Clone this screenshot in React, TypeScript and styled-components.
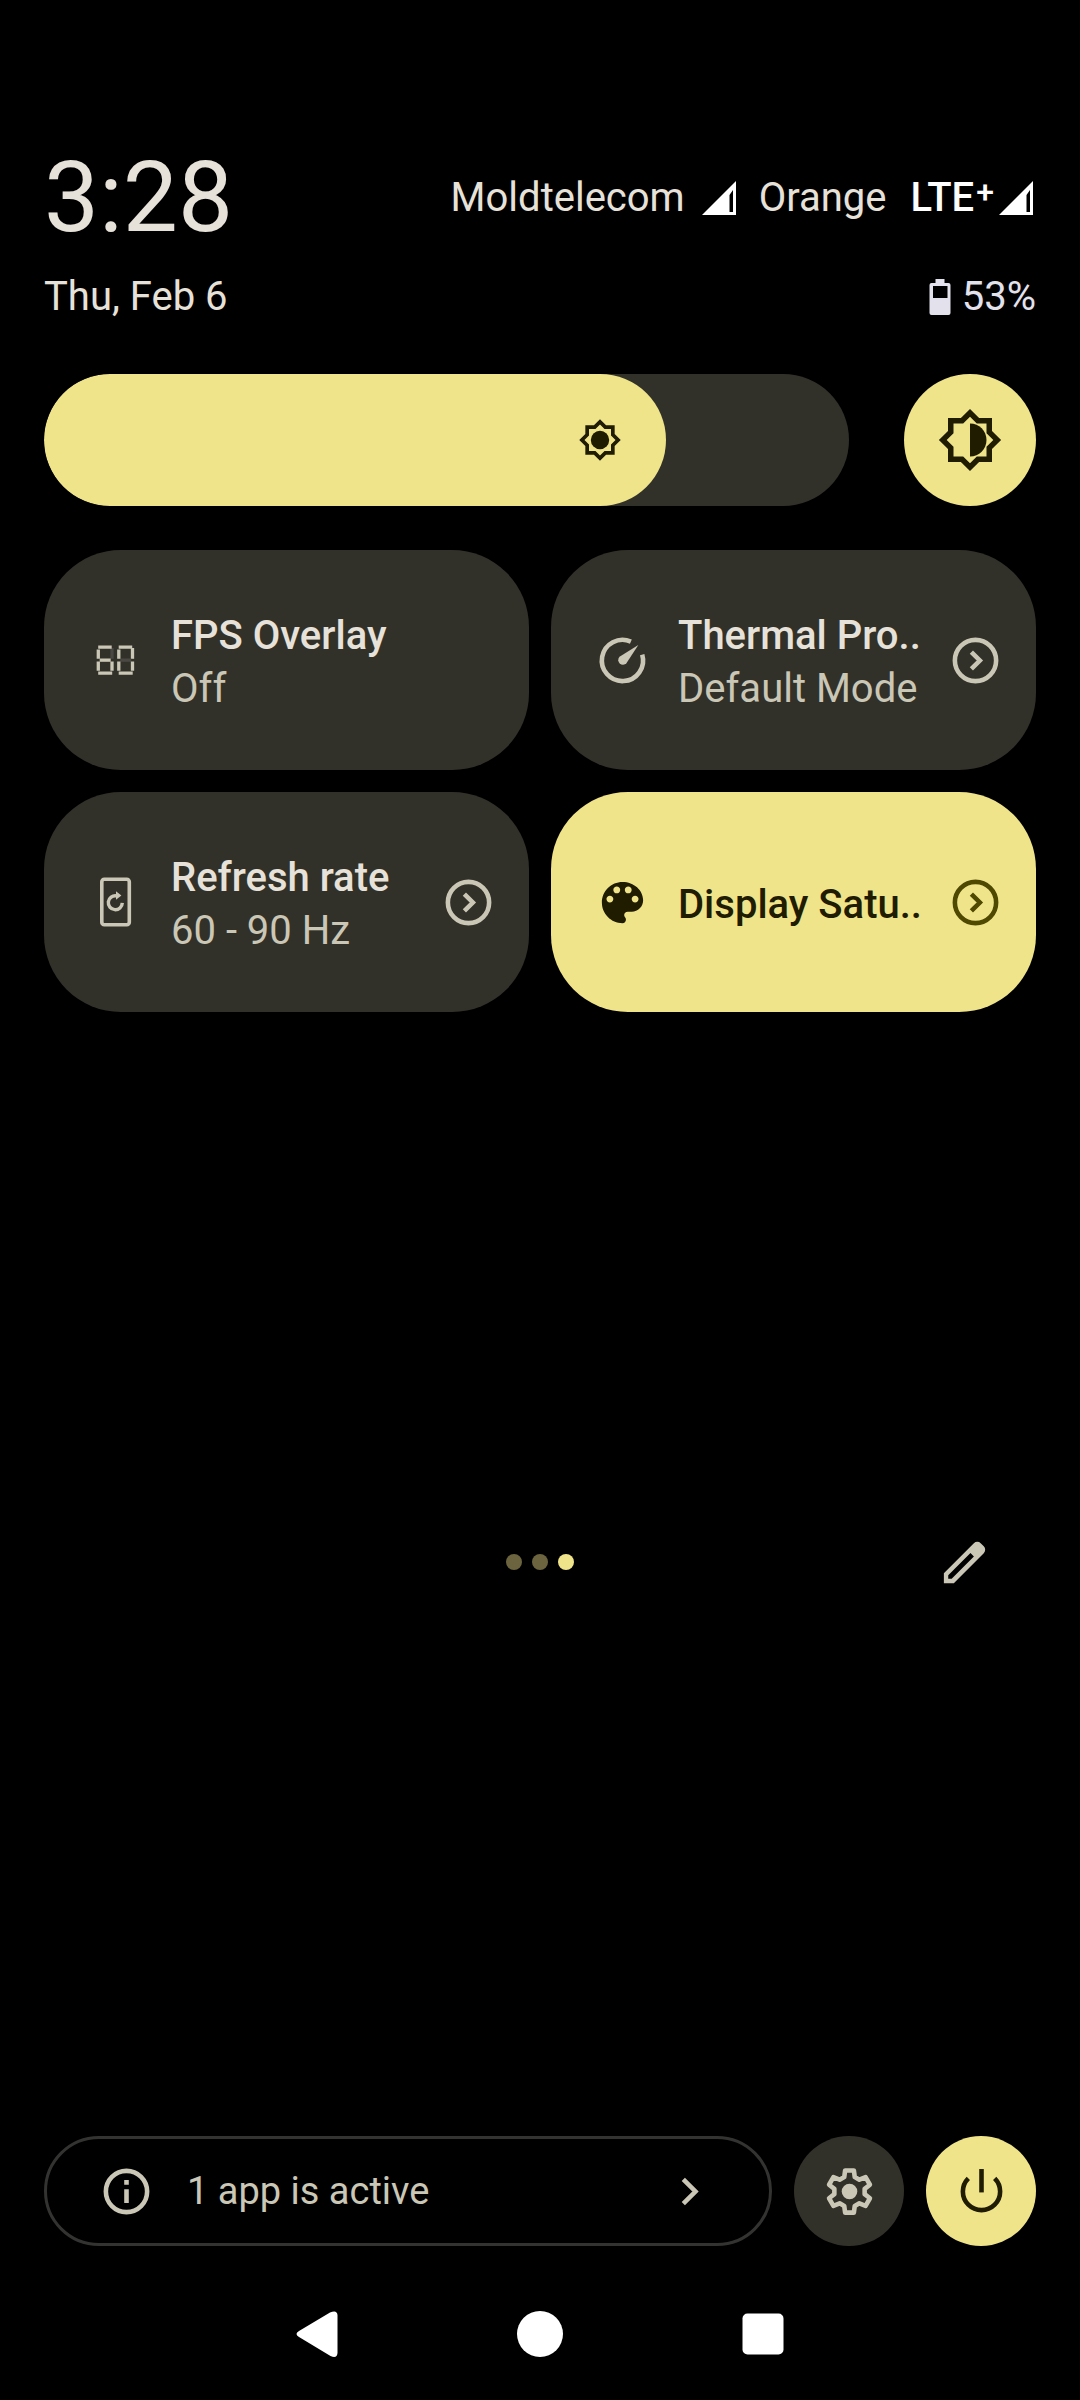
import { useState } from "react";
import type { ReactNode } from "react";
import styled, { createGlobalStyle, css } from "styled-components";

const color = {
  accent: "#f0e48a",
  onAccent: "#1f1c00",
  onAccentDim: "#4e4800",
  tile: "#323129",
  text: "#e7e2d9",
  textDim: "#cac7b6",
};

const GlobalStyle = createGlobalStyle`
  *, *::before, *::after { box-sizing: border-box; }
  body {
    margin: 0;
    background: #000;
    color: ${color.text};
    font-family: Roboto, "Liberation Sans", sans-serif;
    font-size: 40px;
  }
  button { font: inherit; color: inherit; border: 0; margin: 0; cursor: pointer; }
  svg { display: block; flex: none; }
`;

const Shade = styled.main`
  display: flex;
  flex-direction: column;
  min-height: 100vh;
  padding: 140px 44px 0;
`;

const ClockRow = styled.header`
  display: flex;
  align-items: center;
  justify-content: space-between;
  height: 116px;
`;

const Clock = styled.time`
  font-size: 98px;
  line-height: 116px;
`;

const Carriers = styled.div`
  display: flex;
  align-items: center;
  line-height: 48px;
`;

const Carrier = styled.span`
  margin: 0 14px 0 20px;
`;

const NetworkType = styled.span`
  display: flex;
  align-items: center;
  margin-left: 10px;
  color: #fff;
  font-weight: 500;
  gap: 2px;
`;

const Plus = styled.sup`
  font-size: 32px;
  line-height: 32px;
  align-self: flex-start;
  margin-top: 2px;
`;

const DateRow = styled.div`
  display: flex;
  align-items: center;
  justify-content: space-between;
  height: 82px;
  line-height: 48px;
`;

const Battery = styled.div`
  display: flex;
  align-items: center;
  gap: 11px;
  color: #e3e1ec;
`;

const BrightnessRow = styled.div`
  display: flex;
  gap: 55px;
  margin-top: 36px;
`;

const Slider = styled.label`
  position: relative;
  flex: 1;
  height: 132px;
  border-radius: 66px;
  background: ${color.tile};
  overflow: hidden;
`;

const SliderFill = styled.span`
  display: flex;
  align-items: center;
  justify-content: flex-end;
  height: 100%;
  min-width: 132px;
  padding-right: 44px;
  border-radius: 66px;
  background: ${color.accent};
  color: ${color.onAccent};
`;

const SliderInput = styled.input`
  position: absolute;
  inset: 0;
  width: 100%;
  height: 100%;
  margin: 0;
  opacity: 0;
  cursor: pointer;
`;

const RoundButton = styled.button<{ $size: number; $accent?: boolean }>`
  display: flex;
  align-items: center;
  justify-content: center;
  flex: none;
  width: ${(p) => p.$size}px;
  height: ${(p) => p.$size}px;
  padding: 0;
  border-radius: 50%;
  background: ${(p) => (p.$accent ? color.accent : color.tile)};
  color: ${(p) => (p.$accent ? color.onAccent : color.textDim)};
`;

const TileGrid = styled.section`
  display: grid;
  grid-template-columns: 1fr 1fr;
  grid-template-rows: repeat(4, 220px);
  gap: 22px;
  margin-top: 44px;
`;

const TileButton = styled.button<{ $active?: boolean }>`
  display: flex;
  align-items: center;
  min-width: 0;
  padding: 0 33px 0 44px;
  border-radius: 77px;
  text-align: left;
  background: ${color.tile};
  color: ${color.textDim};
  ${(p) =>
    p.$active &&
    css`
      background: ${color.accent};
      color: ${color.onAccent};
    `}
`;

const TileText = styled.span`
  display: flex;
  flex-direction: column;
  flex: 1;
  min-width: 0;
  margin-left: 28px;
  padding-top: 4px;
  line-height: 53px;
  white-space: nowrap;
`;

const TileTitle = styled.span<{ $active?: boolean }>`
  font-weight: 500;
  color: ${(p) => (p.$active ? color.onAccent : color.text)};
`;

const TileChevron = styled.span<{ $active?: boolean }>`
  color: ${(p) => (p.$active ? color.onAccentDim : color.textDim)};
`;

const PagerRow = styled.div`
  display: grid;
  grid-template-columns: 1fr auto 1fr;
  align-items: center;
  height: 132px;
`;

const Dots = styled.div`
  grid-column: 2;
  display: flex;
  gap: 10px;
`;

const Dot = styled.span<{ $current?: boolean }>`
  width: 16px;
  height: 16px;
  border-radius: 50%;
  background: ${(p) => (p.$current ? color.accent : "#6c643f")};
`;

const EditButton = styled.button`
  justify-self: end;
  padding: 38px 44px;
  background: none;
  color: ${color.textDim};
`;

const Footer = styled.footer`
  display: flex;
  gap: 22px;
  margin-top: auto;
`;

const ActiveApps = styled.button`
  display: flex;
  align-items: center;
  flex: 1;
  height: 110px;
  padding: 0 52px;
  border: 3px solid #333331;
  border-radius: 55px;
  background: none;
  color: ${color.textDim};
  font-size: 38px;
  text-align: left;
`;

const ActiveLabel = styled.span`
  flex: 1;
  margin-left: 33px;
`;

const NavBar = styled.nav`
  display: flex;
  align-items: center;
  justify-content: center;
  gap: 135px;
  height: 132px;
  margin-top: 22px;
`;

const NavButton = styled.button`
  display: flex;
  align-items: center;
  justify-content: center;
  width: 88px;
  height: 88px;
  padding: 0;
  background: none;
  color: #fff;
`;

type IconProps = { size?: number; box?: number; children: ReactNode };

function Icon({ size = 55, box = 24, children }: IconProps) {
  return (
    <svg width={size} height={size} viewBox={`0 0 ${box} ${box}`} fill="currentColor" aria-hidden="true">
      {children}
    </svg>
  );
}

const SUN =
  "M20 8.69V4h-4.69L12 .69 8.69 4H4v4.69L.69 12 4 15.31V20h4.69L12 23.31 15.31 20H20v-4.69L23.31 12 20 8.69zm-2 5.79V18h-3.52L12 20.48 9.52 18H6v-3.52L3.52 12 6 9.52V6h3.52L12 3.52 14.48 6H18v3.52L20.48 12 18 14.48z";

/** Outline of a six-toothed gear: one tooth, repeated every 60 degrees. */
const GEAR = [0, 1, 2, 3, 4, 5]
  .flatMap((tooth) => {
    const angle = (tooth * Math.PI) / 3;
    return [
      [-2.3, -6.3],
      [-1.9, -9.2],
      [1.9, -9.2],
      [2.3, -6.3],
    ].map(([x, y]) => {
      const px = 12 + x * Math.cos(angle) - y * Math.sin(angle);
      const py = 12 + x * Math.sin(angle) + y * Math.cos(angle);
      return `${px.toFixed(2)},${py.toFixed(2)}`;
    });
  })
  .join(" ");

const SignalIcon = () => (
  <Icon size={40} box={40}>
    <path d="M37 3v34H3zM30.500 17v17h3.500V12z" fill="#fff" fillRule="evenodd" />
  </Icon>
);

const BatteryIcon = () => (
  <svg width="22" height="36" viewBox="0 0 22 36" fill="currentColor" aria-hidden="true">
    <path
      fillRule="evenodd"
      d="M6.500 0h9v4H19.500a2 2 0 0 1 2 2V34a2 2 0 0 1-2 2H2.500a2 2 0 0 1-2-2V6a2 2 0 0 1 2-2H6.500zM4 7v12h14.500V7z"
    />
  </svg>
);

/** Two seven-segment digits; unlit segments stay faintly visible. */
function SegmentDigit({ x, off }: { x: number; off: "upperRight" | "middle" }) {
  const dim = "#4a4843";
  return (
    <g transform={`translate(${x} 12.500)`} strokeWidth="3.300" fill="none">
      <path d="M15.300 2.500V13.300" stroke={off === "upperRight" ? dim : "currentColor"} />
      <path d="M3 14.650H14" stroke={off === "middle" ? dim : "currentColor"} />
      <path d="M1.500 1.600H15M1.600 4V13.300M1.600 16V25.300M15.300 16V25.300M1.500 27.700H15.500" stroke="currentColor" />
    </g>
  );
}

const FpsIcon = () => (
  <Icon box={55}>
    <SegmentDigit x={8.7} off="upperRight" />
    <SegmentDigit x={29.2} off="middle" />
  </Icon>
);

const GaugeIcon = () => (
  <Icon>
    <path d="M15.660 3.780A9 9 0 1 0 20.600 9.400" fill="none" stroke="currentColor" strokeWidth="2" />
    <path d="M18.900 5.200 13.700 13.200A2 2 0 1 1 10.700 10.400Z" />
  </Icon>
);

const RefreshRateIcon = () => (
  <Icon box={55}>
    <rect x="13.800" y="4.200" width="27.500" height="45.600" rx="2.500" fill="none" stroke="currentColor" strokeWidth="3.600" />
    <path d="M28.500 20.800A7 7 0 1 0 34.300 27.900" fill="none" stroke="currentColor" strokeWidth="3.400" />
    <path d="M28 16.300 33.400 20.500 28 24.700Z" />
  </Icon>
);

const PaletteIcon = () => (
  <Icon>
    <path d="M12 3c-4.970 0-9 4.030-9 9s4.030 9 9 9c.83 0 1.500-.67 1.500-1.500 0-.39-.15-.74-.39-1.010-.23-.26-.38-.61-.38-.99 0-.83.67-1.500 1.500-1.500H16c2.760 0 5-2.240 5-5 0-4.420-4.030-8-9-8zm-5.500 9c-.83 0-1.500-.67-1.500-1.500S5.670 9 6.500 9 8 9.670 8 10.500 7.330 12 6.500 12zm3-4C8.670 8 8 7.330 8 6.500S8.670 5 9.500 5s1.500.67 1.500 1.500S10.330 8 9.500 8zm5 0c-.83 0-1.500-.67-1.500-1.500S13.670 5 14.500 5s1.500.67 1.500 1.500S15.330 8 14.500 8zm3 4c-.83 0-1.500-.67-1.500-1.500S16.670 9 17.500 9s1.500.67 1.500 1.500-.67 1.500-1.500 1.500z" />
  </Icon>
);

const CircleChevronIcon = () => (
  <Icon>
    <g fill="none" stroke="currentColor" strokeWidth="2">
      <circle cx="12" cy="12" r="9" />
      <path d="M10.200 8.300 13.900 12 10.200 15.700" />
    </g>
  </Icon>
);

const EditIcon = () => (
  <Icon>
    <path
      fillRule="evenodd"
      d="M20.410 4.940 19.060 3.590a2.100 2.100 0 0 0-2.970 0L3 16.660V21h4.340L20.410 7.910a2.100 2.100 0 0 0 0-2.970zM6.400 19.100H4.900V17.600L14.600 7.900 16.100 9.400z"
    />
  </Icon>
);

const InfoIcon = () => (
  <Icon>
    <circle cx="12" cy="12" r="9" fill="none" stroke="currentColor" strokeWidth="2" />
    <path d="M11 7h2v2h-2zM11 11h2v6h-2z" />
  </Icon>
);

const ChevronIcon = () => (
  <Icon>
    <path d="M9.300 6.700 14.600 12 9.300 17.300" fill="none" stroke="currentColor" strokeWidth="2" />
  </Icon>
);

const GearIcon = () => (
  <Icon>
    <polygon points={GEAR} fill="none" stroke="currentColor" strokeWidth="2" strokeLinejoin="round" />
    <circle cx="12" cy="12" r="3.400" />
  </Icon>
);

const PowerIcon = () => (
  <Icon>
    <path d="M11 2.200h2v10.200h-2z" />
    <path d="M17.750 6.250A8.130 8.130 0 1 1 6.250 6.250" fill="none" stroke="currentColor" strokeWidth="2" />
  </Icon>
);

type TileData = {
  title: string;
  state?: string;
  icon: ReactNode;
  active?: boolean;
  expandable?: boolean;
};

const tiles: TileData[] = [
  { title: "FPS Overlay", state: "Off", icon: <FpsIcon /> },
  { title: "Thermal Pro..", state: "Default Mode", icon: <GaugeIcon />, expandable: true },
  { title: "Refresh rate", state: "60 - 90 Hz", icon: <RefreshRateIcon />, expandable: true },
  { title: "Display Satu..", icon: <PaletteIcon />, active: true, expandable: true },
];

function Tile({ title, state, icon, active, expandable }: TileData) {
  return (
    <TileButton type="button" $active={active}>
      {icon}
      <TileText>
        <TileTitle $active={active}>{title}</TileTitle>
        {state && <span>{state}</span>}
      </TileText>
      {expandable && (
        <TileChevron $active={active}>
          <CircleChevronIcon />
        </TileChevron>
      )}
    </TileButton>
  );
}

const MAX_BRIGHTNESS = 255;

export default function App() {
  const [brightness, setBrightness] = useState(197);

  return (
    <>
      <GlobalStyle />
      <Shade>
        <ClockRow>
          <Clock>3:28</Clock>
          <Carriers>
            <Carrier>Moldtelecom</Carrier>
            <SignalIcon />
            <Carrier>Orange</Carrier>
            <NetworkType>
              <span>LTE</span>
              <Plus>+</Plus>
              <SignalIcon />
            </NetworkType>
          </Carriers>
        </ClockRow>
        <DateRow>
          <span>Thu, Feb 6</span>
          <Battery>
            <BatteryIcon />
            <span>53%</span>
          </Battery>
        </DateRow>

        <BrightnessRow>
          <Slider>
            <SliderFill style={{ width: `${(brightness / MAX_BRIGHTNESS) * 100}%` }}>
              <Icon size={44}>
                <path d={SUN} />
                <circle cx="12" cy="12" r="5" />
              </Icon>
            </SliderFill>
            <SliderInput
              type="range"
              aria-label="Display brightness"
              min={0}
              max={MAX_BRIGHTNESS}
              value={brightness}
              onChange={(e) => setBrightness(Number(e.target.value))}
            />
          </Slider>
          <RoundButton type="button" $size={132} $accent aria-label="Adaptive brightness">
            <Icon size={66}>
              <path d={SUN} />
              <path d="M12 6v12c3.310 0 6-2.690 6-6s-2.690-6-6-6z" />
            </Icon>
          </RoundButton>
        </BrightnessRow>

        <TileGrid aria-label="Quick settings">
          {tiles.map((tile) => (
            <Tile key={tile.title} {...tile} />
          ))}
        </TileGrid>

        <PagerRow>
          <Dots>
            <Dot />
            <Dot />
            <Dot $current />
          </Dots>
          <EditButton type="button" aria-label="Edit tiles">
            <EditIcon />
          </EditButton>
        </PagerRow>

        <Footer>
          <ActiveApps type="button">
            <InfoIcon />
            <ActiveLabel>1 app is active</ActiveLabel>
            <ChevronIcon />
          </ActiveApps>
          <RoundButton type="button" $size={110} aria-label="Settings">
            <GearIcon />
          </RoundButton>
          <RoundButton type="button" $size={110} $accent aria-label="Power">
            <PowerIcon />
          </RoundButton>
        </Footer>

        <NavBar aria-label="System navigation">
          <NavButton type="button" aria-label="Back">
            <Icon size={48} box={48}>
              <path d="M6 21 37 2.500Q44 -0.500 44.500 5V43Q44 49 37.500 46L6 27Q1 24 6 21Z" />
            </Icon>
          </NavButton>
          <NavButton type="button" aria-label="Home">
            <Icon size={48} box={48}>
              <circle cx="24" cy="24" r="23" />
            </Icon>
          </NavButton>
          <NavButton type="button" aria-label="Recent apps">
            <Icon size={48} box={48}>
              <rect x="3.500" y="3.500" width="41" height="41" rx="5" />
            </Icon>
          </NavButton>
        </NavBar>
      </Shade>
    </>
  );
}
